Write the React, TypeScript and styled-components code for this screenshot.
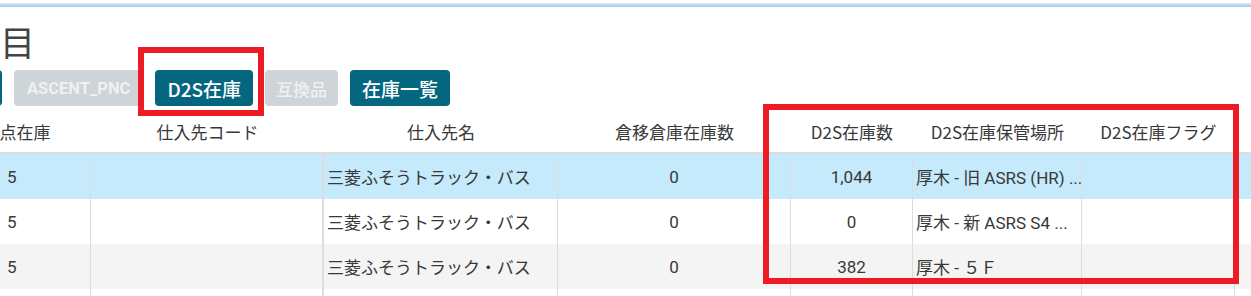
import { createGlobalStyle, styled } from 'styled-components';

const GlobalStyle = createGlobalStyle`
  html, body {
    margin: 0;
    padding: 0;
    background: #fff;
    overflow: hidden;
  }
  body {
    font-family: Roboto, "Noto Sans CJK JP", sans-serif;
    color: #333;
  }
`;

const COLS = '132px 233px 234px 233px 122px 169px 153px 200px';

type Cell = { text: string; align?: 'left' | 'center' | 'right' };

const headers = ['点在庫', '仕入先コード', '仕入先名', '倉移倉庫在庫数', 'D2S在庫数', 'D2S在庫保管場所', 'D2S在庫フラグ', ''];

const rows: { tone: 'selected' | 'plain' | 'striped'; cells: Cell[] }[] = [
  {
    tone: 'selected',
    cells: [
      { text: '5' },
      { text: '' },
      { text: '三菱ふそうトラック・バス' },
      { text: '0', align: 'center' },
      { text: '1,044', align: 'center' },
      { text: '厚木 - 旧 ASRS (HR) ...' },
      { text: '' },
      { text: '' },
    ],
  },
  {
    tone: 'plain',
    cells: [
      { text: '5' },
      { text: '' },
      { text: '三菱ふそうトラック・バス' },
      { text: '0', align: 'center' },
      { text: '0', align: 'center' },
      { text: '厚木 - 新 ASRS S4 ...' },
      { text: '' },
      { text: '' },
    ],
  },
  {
    tone: 'striped',
    cells: [
      { text: '5' },
      { text: '' },
      { text: '三菱ふそうトラック・バス' },
      { text: '0', align: 'center' },
      { text: '382', align: 'center' },
      { text: '厚木 - ５Ｆ' },
      { text: '' },
      { text: '' },
    ],
  },
  {
    tone: 'plain',
    cells: Array.from({ length: 8 }, () => ({ text: '' })),
  },
];

export default function App() {
  return (
    <Page>
      <GlobalStyle />
      <TopBar />
      <Title>目</Title>
      <ButtonRow>
        <TabButton $variant="primary" $width={81} />
        <TabButton $variant="disabled" $latin>ASCENT_PNC</TabButton>
        <TabButton $variant="primary" $marked>D2S在庫</TabButton>
        <TabButton $variant="disabled">互換品</TabButton>
        <TabButton $variant="primary">在庫一覧</TabButton>
      </ButtonRow>
      <Grid>
        <HeaderRow>
          {headers.map((h, i) => (
            <HeaderCell key={i}>{h}</HeaderCell>
          ))}
        </HeaderRow>
        {rows.map((r, ri) => (
          <BodyRow key={ri} $tone={r.tone}>
            {r.cells.map((c, ci) => (
              <BodyCell key={ci} $align={c.align ?? 'left'} $first={ci === 0} $thick={ci === 1}>
                {c.text}
              </BodyCell>
            ))}
          </BodyRow>
        ))}
      </Grid>
      <ColumnsMark />
    </Page>
  );
}

const Page = styled.div`
  position: relative;
  width: 1251px;
  height: 296px;
  overflow: hidden;
`;

const TopBar = styled.div`
  margin-top: 3px;
  height: 4px;
  background: linear-gradient(#dceaf6, #a6cae8);
`;

const Title = styled.h1`
  margin: 14px 0 0 0;
  height: 49px;
  font-family: "Noto Sans CJK JP", sans-serif;
  font-weight: 400;
  font-size: 35px;
  line-height: 40px;
  color: #444;
`;

const ButtonRow = styled.div`
  display: flex;
  align-items: center;
  gap: 12px;
  margin-left: -79px;
  height: 36px;
`;

const TabButton = styled.button<{
  $variant: 'primary' | 'disabled';
  $latin?: boolean;
  $marked?: boolean;
  $width?: number;
}>`
  position: relative;
  height: 36px;
  ${(p) => (p.$width ? `width: ${p.$width}px;` : '')}
  padding: 0 ${(p) => (p.$variant === 'primary' ? '12px' : p.$latin ? '13px' : '11px')};
  border: none;
  border-radius: 4px;
  background: ${(p) => (p.$variant === 'primary' ? '#04667f' : '#ced4d7')};
  color: ${(p) => (p.$variant === 'primary' ? '#fff' : '#eef1f3')};
  font-family: ${(p) => (p.$latin ? 'Roboto, sans-serif' : '"Noto Sans CJK JP", sans-serif')};
  font-size: ${(p) => (p.$latin ? '16.5px' : p.$variant === 'primary' ? '19px' : '17px')};
  font-weight: ${(p) => (p.$latin ? 700 : 500)};
  white-space: nowrap;
  ${(p) =>
    p.$marked
      ? `
  &::after {
    content: '';
    position: absolute;
    left: -17px;
    right: -11px;
    top: -23px;
    bottom: -10px;
    border: 6px solid #ed1c24;
    pointer-events: none;
  }`
      : ''}
`;

const Grid = styled.div`
  margin-left: -41px;
  margin-top: 4px;
`;

const HeaderRow = styled.div`
  display: grid;
  grid-template-columns: ${COLS};
  height: 42px;
  border-bottom: 2px solid #dddddd;
`;

const HeaderCell = styled.div`
  display: flex;
  align-items: center;
  justify-content: center;
  font-family: "Noto Sans CJK JP", sans-serif;
  font-size: 17px;
  color: #383838;
  white-space: nowrap;
`;

const toneBg = {
  selected: '#c5eafb',
  plain: '#ffffff',
  striped: '#f4f4f4',
};

const BodyRow = styled.div<{ $tone: 'selected' | 'plain' | 'striped' }>`
  display: grid;
  grid-template-columns: ${COLS};
  height: 45px;
  background: ${(p) => toneBg[p.$tone]};
`;

const BodyCell = styled.div<{ $align: 'left' | 'center' | 'right'; $first: boolean; $thick: boolean }>`
  display: flex;
  align-items: center;
  justify-content: ${(p) => (p.$align === 'center' ? 'center' : 'flex-start')};
  padding: 0 3px 0 ${(p) => (p.$first ? '48px' : '3px')};
  border-right: ${(p) => (p.$thick ? '2px' : '1px')} solid #dddddd;
  font-size: 17px;
  color: #383838;
  white-space: nowrap;
  overflow: hidden;
`;

const ColumnsMark = styled.div`
  position: absolute;
  left: 763px;
  top: 104px;
  width: 476px;
  height: 180px;
  box-sizing: border-box;
  border: 6px solid #ed1c24;
  pointer-events: none;
`;
